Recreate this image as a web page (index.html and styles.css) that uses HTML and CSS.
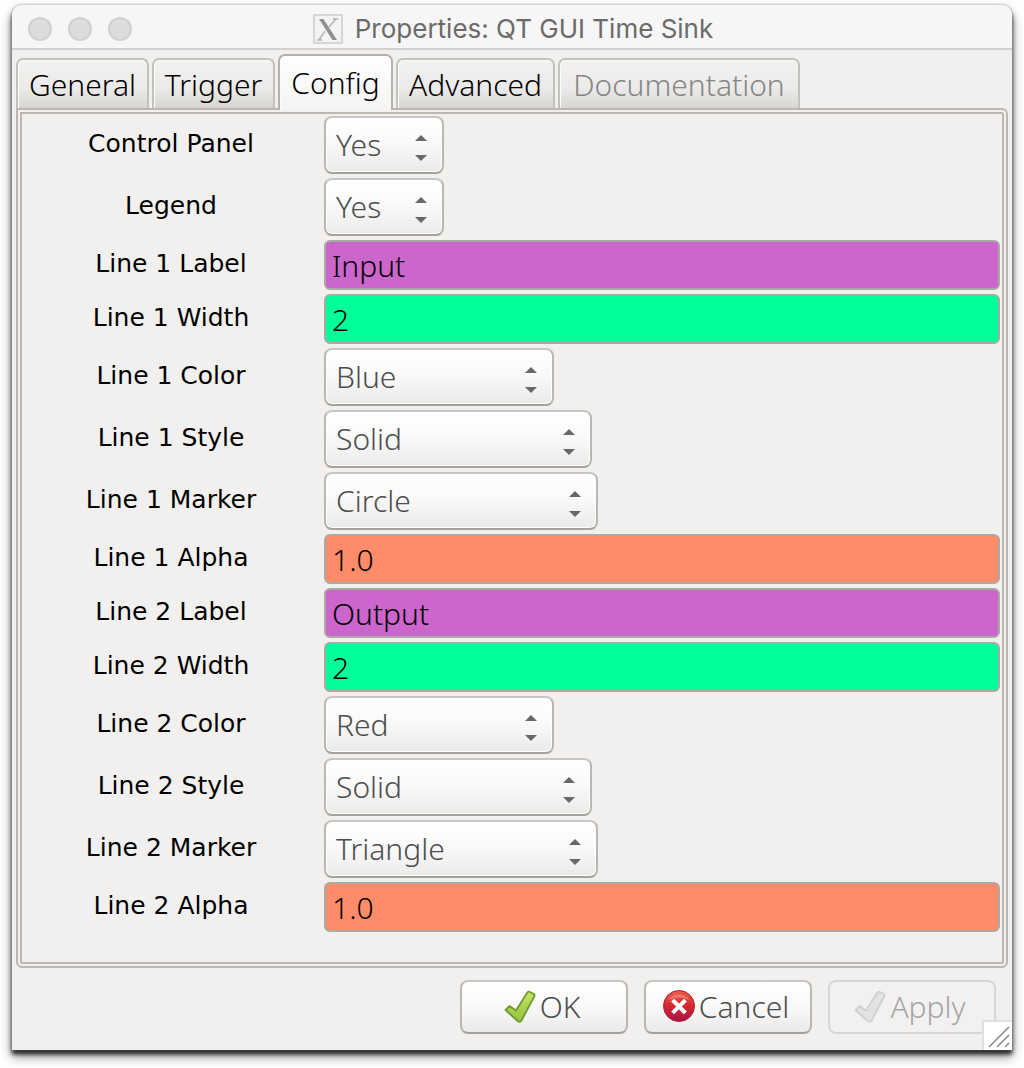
FILE: index.html
```html
<!DOCTYPE html>
<html lang="en">
<head>
<meta charset="utf-8">
<title>Properties: QT GUI Time Sink</title>
<link rel="stylesheet" href="styles.css">
</head>
<body>
<main class="window">
  <header class="titlebar">
    <div class="lights"><span class="light"></span><span class="light"></span><span class="light"></span></div>
    <h1 class="title">
      <svg class="app-icon" width="30" height="30" viewBox="0 0 30 30" aria-hidden="true">
        <rect x="1" y="1" width="28" height="28" fill="#f3f3f3" stroke="#d6d6d6" stroke-width="2"/>
        <path d="M23 5 16 13M12 17 6 26M4 26h5M20 5h5" fill="none" stroke="#b4b4b4" stroke-width="1.5"/>
        <path d="M6 5h4.500L24 26h-4.500z" fill="#909090"/>
      </svg>
      <span>Properties: QT GUI Time Sink</span>
    </h1>
  </header>

  <div class="tabs" role="tablist">
    <button class="tab tab-m" type="button" role="tab">General</button>
    <button class="tab tab-s" type="button" role="tab">Trigger</button>
    <button class="tab tab-active" type="button" role="tab" aria-selected="true">Config</button>
    <button class="tab tab-l" type="button" role="tab">Advanced</button>
    <button class="tab tab-xl" type="button" role="tab" disabled>Documentation</button>
  </div>

  <form class="dialog">
    <div class="panel" role="tabpanel">
      <div class="row"><label class="name" for="ctrl">Control Panel</label><span class="combo combo-s"><select id="ctrl"><option>Yes</option><option>No</option></select></span></div>
      <div class="row"><label class="name" for="legend">Legend</label><span class="combo combo-s"><select id="legend"><option>Yes</option><option>No</option></select></span></div>
      <div class="row"><label class="name" for="label1">Line 1 Label</label><input class="entry string" id="label1" type="text" value="Input"></div>
      <div class="row"><label class="name" for="width1">Line 1 Width</label><input class="entry integer" id="width1" type="text" value="2"></div>
      <div class="row"><label class="name" for="color1">Line 1 Color</label><span class="combo combo-m"><select id="color1"><option>Blue</option><option>Red</option></select></span></div>
      <div class="row"><label class="name" for="style1">Line 1 Style</label><span class="combo combo-l"><select id="style1"><option>Solid</option><option>Dash</option></select></span></div>
      <div class="row"><label class="name" for="marker1">Line 1 Marker</label><span class="combo combo-xl"><select id="marker1"><option>Circle</option><option>Triangle</option></select></span></div>
      <div class="row"><label class="name" for="alpha1">Line 1 Alpha</label><input class="entry real" id="alpha1" type="text" value="1.0"></div>
      <div class="row"><label class="name" for="label2">Line 2 Label</label><input class="entry string" id="label2" type="text" value="Output"></div>
      <div class="row"><label class="name" for="width2">Line 2 Width</label><input class="entry integer" id="width2" type="text" value="2"></div>
      <div class="row"><label class="name" for="color2">Line 2 Color</label><span class="combo combo-m"><select id="color2"><option>Red</option><option>Blue</option></select></span></div>
      <div class="row"><label class="name" for="style2">Line 2 Style</label><span class="combo combo-l"><select id="style2"><option>Solid</option><option>Dash</option></select></span></div>
      <div class="row"><label class="name" for="marker2">Line 2 Marker</label><span class="combo combo-xl"><select id="marker2"><option>Triangle</option><option>Circle</option></select></span></div>
      <div class="row"><label class="name" for="alpha2">Line 2 Alpha</label><input class="entry real" id="alpha2" type="text" value="1.0"></div>
    </div>

    <div class="actions">
      <button class="action" type="button">
        <svg width="32" height="34" viewBox="0 0 32 34" aria-hidden="true">
          <defs><linearGradient id="green" x1="0" y1="0" x2="0" y2="1"><stop offset="0" stop-color="#cbe368"/><stop offset="1" stop-color="#92bf38"/></linearGradient></defs>
          <path d="M1.500 20 5.500 16 12 20.500 23 3 Q24 1 26 2L30 4Q31 5 30 7L17.500 30.500Q16 33 13.500 31z" fill="url(#green)" stroke="#6b9c35" stroke-width="1.800" stroke-linejoin="round"/>
        </svg>
        <span>OK</span>
      </button>
      <button class="action" type="button">
        <svg width="32" height="34" viewBox="0 0 32 34" aria-hidden="true">
          <defs><linearGradient id="red" x1="0" y1="0" x2="0" y2="1"><stop offset="0" stop-color="#ef6048"/><stop offset=".5" stop-color="#d5282e"/><stop offset="1" stop-color="#a5154a"/></linearGradient></defs>
          <circle cx="16" cy="16" r="15.500" fill="url(#red)" stroke="#b52032" stroke-width="1"/>
          <path d="M5 10a13 12 0 0 1 22 0Q16 5 5 10z" fill="#fff" opacity=".25"/>
          <path d="m11 11.500 10 10M21 11.500 11 21.500" stroke="#fff" stroke-width="4" stroke-linecap="square"/>
        </svg>
        <span>Cancel</span>
      </button>
      <button class="action" type="button" disabled>
        <svg width="32" height="34" viewBox="0 0 32 34" aria-hidden="true">
          <path d="M1.500 20 5.500 16 12 20.500 23 3 Q24 1 26 2L30 4Q31 5 30 7L17.500 30.500Q16 33 13.500 31z" fill="#e2e3e1" stroke="#d0d1ce" stroke-width="1.800" stroke-linejoin="round"/>
        </svg>
        <span>Apply</span>
      </button>
    </div>
  </form>
  <svg class="grip" width="30" height="30" viewBox="0 0 30 30" aria-hidden="true">
    <rect width="30" height="30" fill="#fff"/>
    <path d="M1 30V1h29" fill="none" stroke="#e0e0e0" stroke-width="2"/>
    <path d="M7 27 27 7M15 27 27 15M23 27l4-4" fill="none" stroke="#8c8c8c" stroke-width="1.600"/>
  </svg>
</main>
</body>
</html>
```
FILE: styles.css
```css
* { box-sizing: border-box; }

body {
  margin: 0;
  padding: 5px 12px 18px;
  background: #fff;
  font-family: "Noto Sans", "Open Sans", sans-serif;
}

.window {
  position: relative;
  background: #f1f0ee;
  border-radius: 10px 10px 0 0;
  box-shadow: 0 -1px 1px #d4d4d4, 0 0 2px #777, 0 4px 4px #222, 0 6px 12px rgba(0, 0, 0, .5);
}

.titlebar {
  display: grid;
  grid-template-columns: 1fr auto 1fr;
  align-items: center;
  height: 45px;
  padding: 4px 14px 0 16px;
  background: #f6f6f6;
  border-bottom: 2px solid #d2d1cf;
  border-radius: 10px 10px 0 0;
}

.lights { display: flex; gap: 16px; }

.light {
  width: 24px;
  height: 24px;
  background: #dcdcdc;
  border: 2px solid #d0d0d0;
  border-radius: 50%;
}

.title {
  display: flex;
  align-items: center;
  gap: 12px;
  margin: 0;
  color: #6a6a6a;
  font: 400 26px/30px Inter, sans-serif;
}

.tabs {
  display: flex;
  align-items: flex-end;
  gap: 3px;
  height: 58px;
  padding: 0 4px;
}

.tab {
  height: 50px;
  padding: 2px 0 0;
  color: #000;
  background: linear-gradient(#f3f2f1, #ebeae8 60%, #d8d6d3);
  border: 2px solid #c3c1bd;
  border-bottom: 0;
  border-radius: 7px 7px 0 0;
  box-shadow: inset 1px 1px #fbfbfa;
  font: 300 30px/46px "Noto Sans", sans-serif;
}

.tab:disabled { color: #868686; }

.tab-s { width: 123px; }
.tab-m { width: 133px; }
.tab-l { width: 159px; }
.tab-xl { width: 242px; }

.tab-active {
  z-index: 1;
  width: 115px;
  height: 56px;
  margin-bottom: -2px;
  padding: 0;
  background: linear-gradient(#fff, #f5f4f3);
  border-color: #b5b2ab;
}

.panel {
  display: flex;
  flex-direction: column;
  gap: 4px;
  margin: 0 4px;
  padding: 2px 2px 30px 0;
  border: 6px double #bab8b0;
  border-radius: 0 6px 6px 6px;
}

.row {
  display: grid;
  grid-template-columns: 298px 1fr;
  column-gap: 4px;
  align-items: center;
}

.name {
  padding-bottom: 2px;
  color: #000;
  font: 400 25px/28px "DejaVu Sans", sans-serif;
  text-align: center;
}

.combo { position: relative; display: block; height: 58px; }
.combo-s { width: 120px; }
.combo-m { width: 230px; }
.combo-l { width: 268px; }
.combo-xl { width: 274px; }

.combo select {
  appearance: none;
  width: 100%;
  height: 100%;
  padding: 0 40px 0 10px;
  color: #4d4d4d;
  background: linear-gradient(#fff, #fafafa 45%, #ebeae9);
  border: 2px solid;
  border-color: #c9c5c2 #bab7b3 #a5a29c;
  border-radius: 8px;
  box-shadow: inset 0 0 0 1px #fff;
  font: 300 30px/54px "Noto Sans", sans-serif;
}

.combo::before,
.combo::after {
  content: "";
  position: absolute;
  right: 17px;
  border: 6px solid transparent;
  pointer-events: none;
}

.combo::before { top: 13px; border-bottom-color: #686868; }
.combo::after { bottom: 7px; border-top-color: #686868; }

.entry {
  width: 100%;
  height: 50px;
  padding: 0 6px;
  color: #000;
  border: 2px solid #aaa9a4;
  border-radius: 6px;
  font: 300 30px/46px "Noto Sans", sans-serif;
}

.string { background: #cc66cc; }
.integer { background: #00ff99; }
.real { background: #ff8c69; }

.actions {
  display: flex;
  justify-content: flex-end;
  gap: 16px;
  padding: 12px 16px 16px;
}

.action {
  display: flex;
  align-items: center;
  justify-content: center;
  gap: 4px;
  width: 168px;
  height: 54px;
  padding: 0 4px 0 0;
  color: #4d4d4d;
  background: linear-gradient(#fff, #fafafa 45%, #ebeae9);
  border: 2px solid;
  border-color: #c9c5c2 #bab7b3 #a5a29c;
  border-radius: 8px;
  font: 300 30px/50px "Noto Sans", sans-serif;
}

.action:disabled {
  color: #a5a5a5;
  background: #f2f1f0;
  border-color: #d8d6d4;
}

.grip { position: absolute; right: 0; bottom: 0; }
```
